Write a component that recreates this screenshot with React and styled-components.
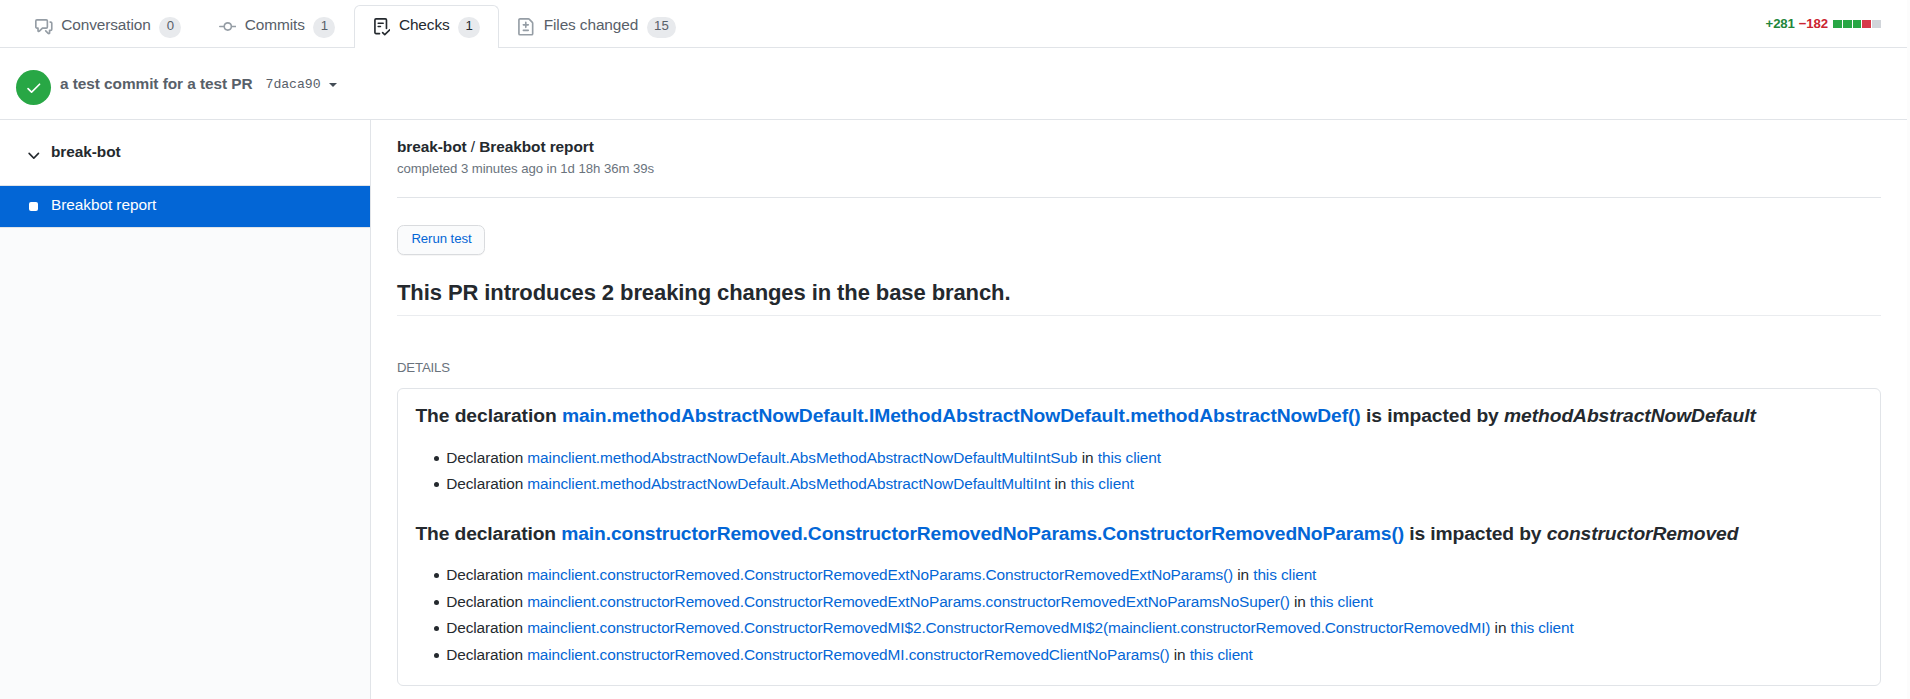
import React from "react";
import styled, { createGlobalStyle } from "styled-components";

const Global = createGlobalStyle`
  * { box-sizing: border-box; }
  body { margin: 0; background: #fff; color: #24292e; font-family: "Liberation Sans", Arial, sans-serif; font-size: 15.4px; line-height: 1.5; letter-spacing: -0.06px; overflow: hidden; }
  h1, h2, h3, p, ul { margin: 0; padding: 0; }
`;

const Page = styled.div`
  display: flex;
  flex-direction: column;
  width: 100%;
  height: 699px;
  overflow: hidden;
  border-right: 3px solid #fcfcfc;
`;

const TabBar = styled.nav`
  display: flex;
  flex: none;
  height: 48px;
  padding: 5px 26px 0 16.4px;
  border-bottom: 1px solid #e1e4e8;
`;

const Tab = styled.a`
  display: flex;
  height: 43px;
  padding: 9px 17.6px 0;
  border: 1px solid ${(p) => (p.$active ? "#e1e4e8" : "transparent")};
  border-bottom: 0;
  border-radius: 6px 6px 0 0;
  background: ${(p) => (p.$active ? "#fff" : "transparent")};
  color: ${(p) => (p.$active ? "#24292e" : "#586069")};
  letter-spacing: -0.1px;
  line-height: 19px;

  svg {
    flex: none;
    width: 17.6px;
    height: 17.6px;
    margin: 3px 8.7px 0 0;
    fill: ${(p) => (p.$active ? "#24292e" : "#959da5")};
  }
`;

const Counter = styled.span`
  height: 21px;
  min-width: 22px;
  margin: 2px 0 0 8.6px;
  padding: 0 7.3px;
  border-radius: 22px;
  background: #e8eaed;
  font-size: 13.2px;
  letter-spacing: 0;
  line-height: 18px;
  text-align: center;
`;

const DiffStat = styled.div`
  display: flex;
  gap: 4px;
  margin-left: auto;
  padding-top: 9px;
  font-size: 13.2px;
  font-weight: 700;
  letter-spacing: -0.12px;
  line-height: 20px;
`;
const Added = styled.span`color: #22863a;`;
const Deleted = styled.span`color: #cb2431;`;
const Blocks = styled.span`
  display: flex;
  gap: 1px;
  padding: 6px 0 0 1px;
`;
const Block = styled.i`
  width: 8.8px;
  height: 8px;
  background: ${(p) => p.$color};
`;

const CommitBar = styled.header`
  display: flex;
  flex: none;
  height: 72px;
  padding: 22px 16px 0;
  border-bottom: 1px solid #e1e4e8;
  color: #586069;
`;
const Status = styled.span`
  display: flex;
  align-items: center;
  justify-content: center;
  width: 35px;
  height: 35px;
  border-radius: 50%;
  background: #28a745;
  fill: #fff;
`;
const CommitTitle = styled.strong`
  margin-left: 9px;
  line-height: 27px;
`;
const Sha = styled.span`
  margin-left: 13px;
  font: 13.2px/29px "Liberation Mono", monospace;
  letter-spacing: -0.05px;
`;
const Caret = styled.i`
  width: 0;
  height: 0;
  margin: 13px 0 0 8px;
  border: 4.4px solid transparent;
  border-top-color: #444d56;
  border-bottom: 0;
`;

const Body = styled.div`
  display: flex;
  flex: 1;
  min-height: 0;
`;
const Sidebar = styled.aside`
  width: 371px;
  flex: none;
  border-right: 1px solid #e1e4e8;
  background: #fafbfc;
`;
const SuiteRow = styled.div`
  display: flex;
  height: 66px;
  padding: 20px 25px 0;
  border-bottom: 1px solid #e1e4e8;
  background: #fff;
  font-weight: 700;

  svg { width: 17.6px; height: 17.6px; margin: 6px 8.4px 0 0; fill: #24292e; }
`;
const RunRow = styled.div`
  display: flex;
  height: 42px;
  padding: 7px 29px 0;
  border-bottom: 1px solid #e1e4e8;
  background: #0366d6;
  color: #fff;
`;
const RunDot = styled.i`
  width: 9px;
  height: 9px;
  margin: 9px 13px 0 0;
  border-radius: 2px;
  background: #fff;
`;

const Main = styled.main`
  flex: 1;
  min-width: 0;
  padding: 0 26px;
`;
const RunHeader = styled.header`
  height: 78px;
  padding-top: 15px;
  border-bottom: 1px solid #e1e4e8;
`;
const RunTitle = styled.h1`
  font-size: 15.4px;
  line-height: 23px;
  span { font-weight: 400; }
`;
const RunMeta = styled.p`
  color: #6a737d;
  font-size: 13.2px;
  line-height: 20px;
  margin-top: 1px;
`;
const Rerun = styled.button`
  display: block;
  width: 88px;
  height: 30px;
  margin-top: 27px;
  padding: 0 0 3px 1px;
  border: 1px solid #d9dbde;
  border-radius: 6.6px;
  background: #fafbfc;
  box-shadow: 0 1px 0 rgba(27, 31, 35, 0.04);
  color: #0366d6;
  font: 13.2px "Liberation Sans", sans-serif;
  letter-spacing: -0.06px;
`;
const Summary = styled.h2`
  height: 61px;
  padding-top: 20px;
  border-bottom: 1px solid #eaecef;
  font-size: 22px;
  letter-spacing: -0.09px;
  line-height: 35px;
`;
const DetailsLabel = styled.p`
  margin-top: 42px;
  color: #6a737d;
  font-size: 13.2px;
  letter-spacing: -0.15px;
  line-height: 20px;
`;
const DetailsBox = styled.section`
  height: 298px;
  margin-top: 10px;
  padding: 14px 17.4px 0;
  border: 1px solid #e1e4e8;
  border-radius: 6px;
`;
const Declaration = styled.h3`
  font-size: 19.25px;
  letter-spacing: ${(p) => p.$tracking}px;
  line-height: 26px;
  white-space: nowrap;
`;
const Impacts = styled.ul`
  margin: 16.6px 0 25.4px;
  padding-left: 30.8px;
  letter-spacing: ${(p) => p.$tracking}px;
  list-style: none;
`;
const Impact = styled.li`
  line-height: 23.1px;

  & + & { margin-top: 3.5px; }

  &::before {
    content: "";
    display: inline-block;
    width: 5px;
    height: 5px;
    margin: 0 7.5px 0 -12.5px;
    border-radius: 50%;
    background: #24292e;
    vertical-align: 2px;
  }
`;
const Link = styled.a`color: #0366d6;`;

const icons = {
  conversation: "M1.5 2.75a.25.25 0 01.25-.25h8.5a.25.25 0 01.25.25v5.5a.25.25 0 01-.25.25h-3.5a.75.75 0 00-.53.22L3.5 11.44V9.25a.75.75 0 00-.75-.75h-1a.25.25 0 01-.25-.25v-5.5zM1.75 1A1.75 1.75 0 000 2.75v5.5C0 9.216.784 10 1.75 10H2v1.543a1.457 1.457 0 002.487 1.03L7.061 10h3.189A1.75 1.75 0 0012 8.25v-5.5A1.75 1.75 0 0010.25 1h-8.5zM14.5 4.75a.25.25 0 00-.25-.25h-.5a.75.75 0 110-1.5h.5c.966 0 1.75.784 1.75 1.75v5.5A1.75 1.75 0 0114.25 12H14v1.543a1.457 1.457 0 01-2.487 1.03L9.22 12.28a.75.75 0 111.06-1.06l2.22 2.22v-2.19a.75.75 0 01.75-.75h1a.25.25 0 00.25-.25v-5.5z",
  commit: "M10.5 7.75a2.5 2.5 0 11-5 0 2.5 2.5 0 015 0zm1.43.75a4.002 4.002 0 01-7.86 0H.75a.75.75 0 110-1.5h3.32a4.001 4.001 0 017.86 0h3.32a.75.75 0 110 1.5h-3.32z",
  checks: "M2.5 1.75a.25.25 0 01.25-.25h8.5a.25.25 0 01.25.25v7.736a.75.75 0 101.5 0V1.75A1.75 1.75 0 0011.25 0h-8.5A1.75 1.75 0 001 1.75v11.5c0 .966.784 1.75 1.75 1.75h3.17a.75.75 0 000-1.5H2.75a.25.25 0 01-.25-.25V1.75zM4.75 4a.75.75 0 000 1.5h4.5a.75.75 0 000-1.5h-4.5zM4 7.75A.75.75 0 014.75 7h2a.75.75 0 010 1.5h-2A.75.75 0 014 7.75zm11.774 3.537a.75.75 0 00-1.048-1.074L10.7 14.145 9.281 12.72a.75.75 0 00-1.062 1.058l1.943 1.95a.75.75 0 001.055.008l4.557-4.45z",
  files: "M2.75 1.5a.25.25 0 00-.25.25v12.5c0 .138.112.25.25.25h10.5a.25.25 0 00.25-.25V4.664a.25.25 0 00-.073-.177l-2.914-2.914a.25.25 0 00-.177-.073H2.75zM1 1.75C1 .784 1.784 0 2.75 0h7.586c.464 0 .909.184 1.237.513l2.914 2.914c.329.328.513.773.513 1.237v9.586A1.75 1.75 0 0113.25 16H2.75A1.75 1.75 0 011 14.25V1.75zm7 1.5a.75.75 0 01.75.75v1.5h1.5a.75.75 0 010 1.5h-1.5v1.5a.75.75 0 01-1.5 0V7h-1.5a.75.75 0 010-1.5h1.5V4A.75.75 0 018 3.25zm-3 8a.75.75 0 01.75-.75h4.5a.75.75 0 010 1.5h-4.5a.75.75 0 01-.75-.75z",
  check: "M13.78 4.22a.75.75 0 010 1.06l-7.25 7.25a.75.75 0 01-1.06 0L2.22 9.28a.75.75 0 011.06-1.06L6 10.94l6.72-6.72a.75.75 0 011.06 0z",
  chevron: "M12.78 6.22a.75.75 0 010 1.06l-4.25 4.25a.75.75 0 01-1.06 0L3.22 7.28a.75.75 0 011.06-1.06L8 9.94l3.72-3.72a.75.75 0 011.06 0z",
};

function Icon({ name, size = 17.6 }) {
  return (
    <svg width={size} height={size} viewBox="0 0 16 16" aria-hidden="true">
      <path fillRule="evenodd" d={icons[name]} />
    </svg>
  );
}

const tabs = [
  { icon: "conversation", label: "Conversation", count: 0 },
  { icon: "commit", label: "Commits", count: 1 },
  { icon: "checks", label: "Checks", count: 1, active: true },
  { icon: "files", label: "Files changed", count: 15 },
];

const blocks = ["#28a745", "#28a745", "#28a745", "#d73a49", "#d1d5da"];

const report = [
  {
    name: "main.methodAbstractNowDefault.IMethodAbstractNowDefault.methodAbstractNowDef()",
    kind: "methodAbstractNowDefault",
    headingTracking: -0.07,
    listTracking: -0.08,
    impacts: [
      "mainclient.methodAbstractNowDefault.AbsMethodAbstractNowDefaultMultiIntSub",
      "mainclient.methodAbstractNowDefault.AbsMethodAbstractNowDefaultMultiInt",
    ],
  },
  {
    name: "main.constructorRemoved.ConstructorRemovedNoParams.ConstructorRemovedNoParams()",
    kind: "constructorRemoved",
    headingTracking: -0.11,
    listTracking: -0.1,
    impacts: [
      "mainclient.constructorRemoved.ConstructorRemovedExtNoParams.ConstructorRemovedExtNoParams()",
      "mainclient.constructorRemoved.ConstructorRemovedExtNoParams.constructorRemovedExtNoParamsNoSuper()",
      "mainclient.constructorRemoved.ConstructorRemovedMI$2.ConstructorRemovedMI$2(mainclient.constructorRemoved.ConstructorRemovedMI)",
      "mainclient.constructorRemoved.ConstructorRemovedMI.constructorRemovedClientNoParams()",
    ],
  },
];

export default function App() {
  return (
    <Page>
      <Global />
      <TabBar>
        {tabs.map((t) => (
          <Tab key={t.label} $active={t.active}>
            <Icon name={t.icon} />
            {t.label}
            <Counter>{t.count}</Counter>
          </Tab>
        ))}
        <DiffStat>
          <Added>+281</Added>
          <Deleted>−182</Deleted>
          <Blocks>{blocks.map((c, i) => <Block key={i} $color={c} />)}</Blocks>
        </DiffStat>
      </TabBar>
      <CommitBar>
        <Status><Icon name="check" /></Status>
        <CommitTitle>a test commit for a test PR</CommitTitle>
        <Sha>7daca90</Sha>
        <Caret />
      </CommitBar>
      <Body>
        <Sidebar>
          <SuiteRow><Icon name="chevron" />break-bot</SuiteRow>
          <RunRow><RunDot />Breakbot report</RunRow>
        </Sidebar>
        <Main>
          <RunHeader>
            <RunTitle>break-bot <span>/</span> Breakbot report</RunTitle>
            <RunMeta>completed 3 minutes ago in 1d 18h 36m 39s</RunMeta>
          </RunHeader>
          <Rerun>Rerun test</Rerun>
          <Summary>This PR introduces 2 breaking changes in the base branch.</Summary>
          <DetailsLabel>DETAILS</DetailsLabel>
          <DetailsBox>
            {report.map((d) => (
              <React.Fragment key={d.name}>
                <Declaration $tracking={d.headingTracking}>
                  The declaration <Link>{d.name}</Link> is impacted by <em>{d.kind}</em>
                </Declaration>
                <Impacts $tracking={d.listTracking}>
                  {d.impacts.map((n) => (
                    <Impact key={n}>Declaration <Link>{n}</Link> in <Link>this client</Link></Impact>
                  ))}
                </Impacts>
              </React.Fragment>
            ))}
          </DetailsBox>
        </Main>
      </Body>
    </Page>
  );
}
